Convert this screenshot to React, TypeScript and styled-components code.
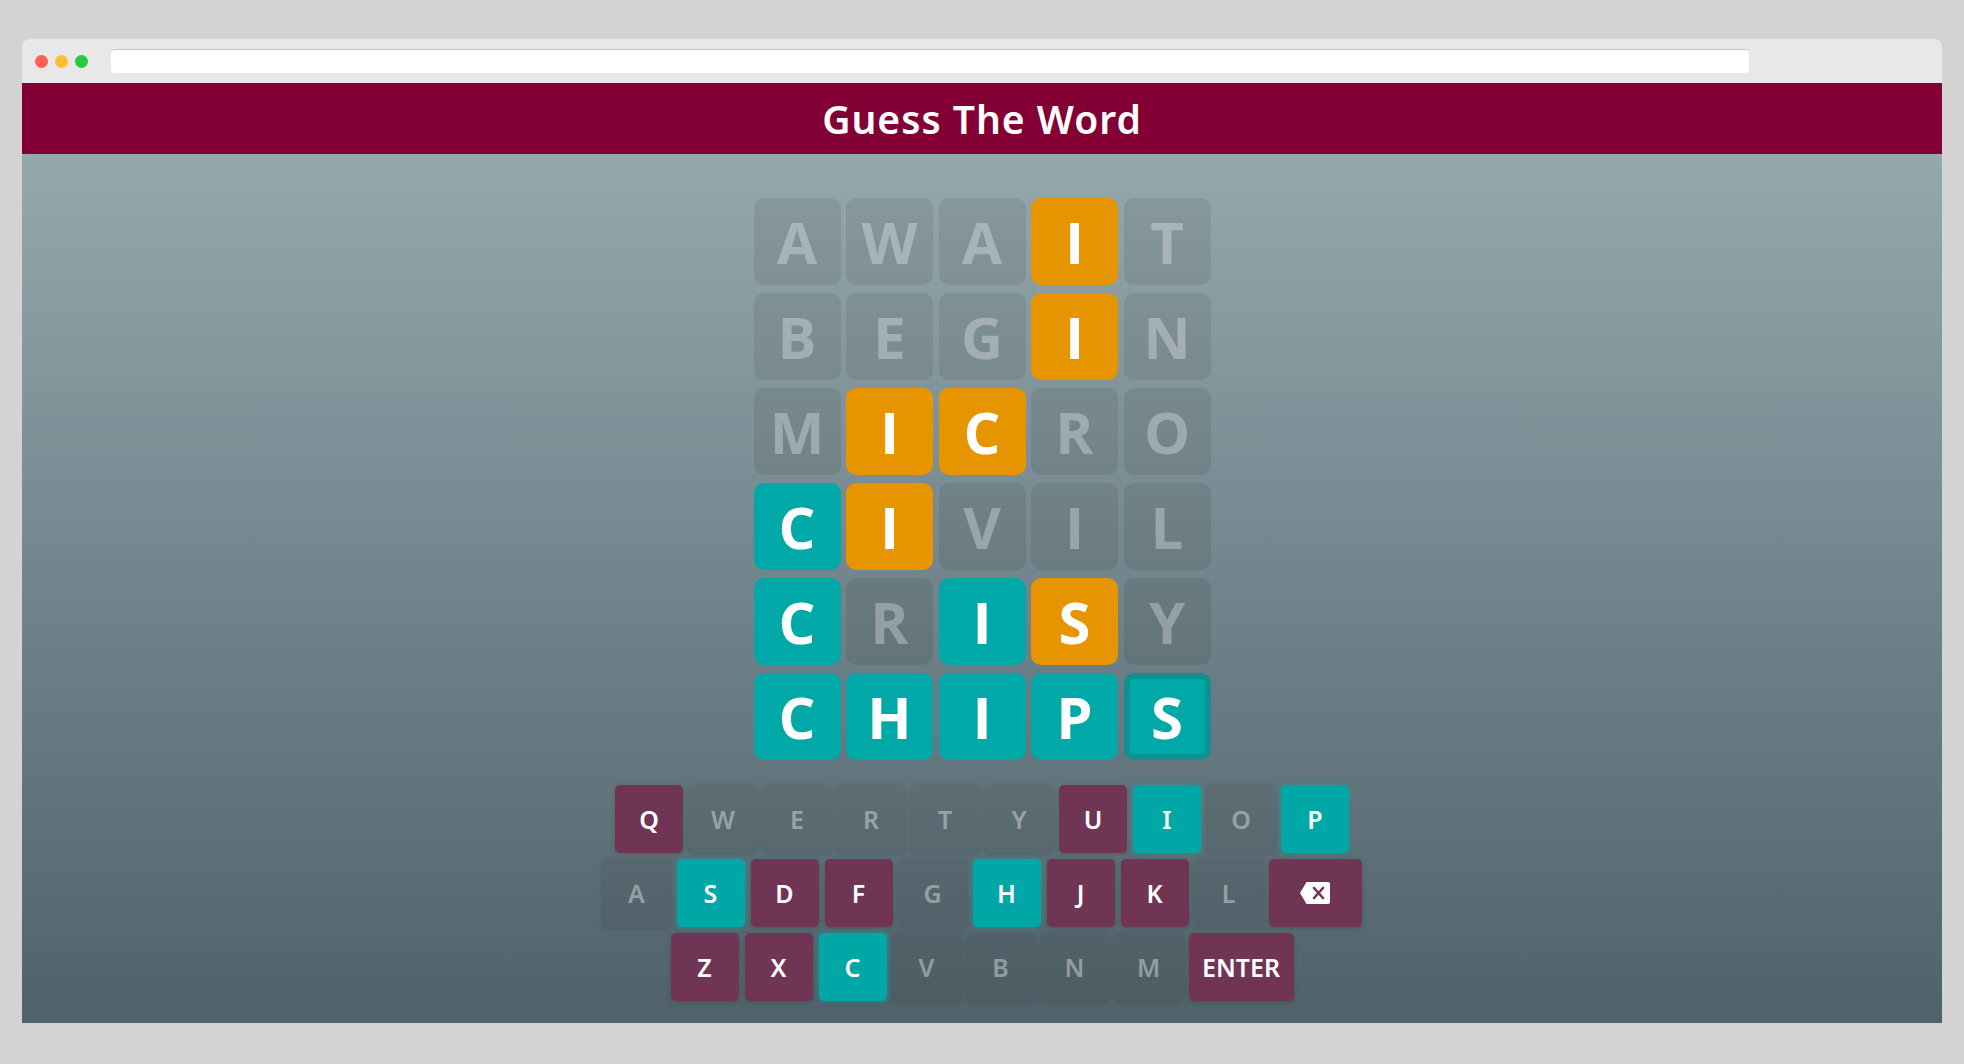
import styled, { createGlobalStyle } from 'styled-components';

type TileState = 'absent' | 'present' | 'correct' | 'active';
type KeyState = 'unused' | 'absent' | 'correct';

const GUESSES: { letter: string; state: TileState }[][] = [
  ['A', 'W', 'A', 'I', 'T'],
  ['B', 'E', 'G', 'I', 'N'],
  ['M', 'I', 'C', 'R', 'O'],
  ['C', 'I', 'V', 'I', 'L'],
  ['C', 'R', 'I', 'S', 'Y'],
  ['C', 'H', 'I', 'P', 'S'],
].map((row, r) =>
  row.map((letter, c) => {
    const marks: Record<string, TileState> = {
      '0-3': 'present',
      '1-3': 'present',
      '2-1': 'present',
      '2-2': 'present',
      '3-0': 'correct',
      '3-1': 'present',
      '4-0': 'correct',
      '4-2': 'correct',
      '4-3': 'present',
      '5-0': 'correct',
      '5-1': 'correct',
      '5-2': 'correct',
      '5-3': 'correct',
      '5-4': 'active',
    };
    return { letter, state: marks[`${r}-${c}`] ?? 'absent' };
  })
);

const KEY_ROWS = ['QWERTYUIOP', 'ASDFGHJKL', 'ZXCVBNM'];
const ABSENT_KEYS = 'QUDFJKZX';
const CORRECT_KEYS = 'IPSHC';

const keyState = (k: string): KeyState => {
  if (CORRECT_KEYS.includes(k)) return 'correct';
  if (ABSENT_KEYS.includes(k)) return 'absent';
  return 'unused';
};

const GlobalStyle = createGlobalStyle`
  * { box-sizing: border-box; }
  body {
    margin: 0;
    background: #d3d3d3;
    font-family: "Noto Sans", "Open Sans", sans-serif;
  }
`;

const Page = styled.div`
  height: 1064px;
  padding: 39px 22px 41px;
`;

const Window = styled.div`
  height: 100%;
  display: flex;
  flex-direction: column;
  border-radius: 8px 8px 0 0;
  overflow: hidden;
`;

const TitleBar = styled.div`
  height: 44px;
  flex-shrink: 0;
  display: flex;
  align-items: center;
  padding-left: 13px;
  background: #e8e8e8;
`;

const Dot = styled.span<{ $color: string }>`
  width: 13px;
  height: 13px;
  margin-right: 7px;
  border-radius: 50%;
  background: ${(p) => p.$color};
`;

const AddressBar = styled.div`
  width: 1638px;
  height: 24px;
  margin-left: 16px;
  background: #fff;
  border-top: 1px solid #c4c4c4;
  border-radius: 4px;
`;

const Header = styled.header`
  height: 71px;
  flex-shrink: 0;
  display: flex;
  align-items: center;
  justify-content: center;
  background: #830034;
`;

const Title = styled.h1`
  margin: 0;
  color: #fff;
  font-family: "Noto Sans", sans-serif;
  font-weight: 600;
  font-size: 39px;
  letter-spacing: 1px;
`;

const Main = styled.main`
  flex: 1;
  display: flex;
  flex-direction: column;
  align-items: center;
  padding-top: 44px;
  background: linear-gradient(to bottom, #95a8ae 0%, #4f6169 100%);
`;

const Board = styled.div`
  display: grid;
  grid-template-columns: repeat(5, 87px);
  grid-auto-rows: 87px;
  column-gap: 5.5px;
  row-gap: 8px;
`;

const tileBg: Record<TileState, string> = {
  absent: 'rgba(0, 0, 0, 0.08)',
  present: '#e69500',
  correct: '#00a8a8',
  active: '#00a8a8',
};

const Tile = styled.div<{ $state: TileState }>`
  display: flex;
  align-items: center;
  justify-content: center;
  border-radius: 10px;
  background: ${(p) => tileBg[p.$state]};
  border: ${(p) => (p.$state === 'active' ? '6px solid #0f9191' : 'none')};
  color: ${(p) => (p.$state === 'absent' ? 'rgba(255, 255, 255, 0.3)' : '#fff')};
  font-family: "Open Sans", sans-serif;
  font-weight: 700;
  font-size: 58px;
  line-height: 1;
`;

const Keyboard = styled.div`
  margin-top: 25px;
  display: flex;
  flex-direction: column;
  align-items: center;
  gap: 6px;
`;

const KeyRow = styled.div`
  display: flex;
  gap: 6px;
`;

const keyBg: Record<KeyState, string> = {
  unused: 'rgba(0, 0, 0, 0.06)',
  absent: '#703555',
  correct: '#00a7a7',
};

const Key = styled.button<{ $state: KeyState; $width?: number }>`
  width: ${(p) => p.$width ?? 68}px;
  height: 68px;
  padding: 0;
  display: flex;
  align-items: center;
  justify-content: center;
  border: none;
  border-radius: 5px;
  background: ${(p) => keyBg[p.$state]};
  box-shadow: ${(p) =>
    p.$state === 'correct'
      ? '0 0 6px rgba(0, 168, 168, 0.45)'
      : '0 1px 5px rgba(0, 0, 0, 0.16)'};
  color: ${(p) => (p.$state === 'unused' ? 'rgba(255, 255, 255, 0.4)' : '#fff')};
  font-family: "Noto Sans", sans-serif;
  font-weight: 600;
  font-size: 25px;
  cursor: pointer;
`;

const BackspaceIcon = () => (
  <svg width="30" height="22" viewBox="0 0 30 22">
    <path d="M6.5 0 H28 Q30 0 30 2 V20 Q30 22 28 22 H6.5 L0 11 Z" fill="#fff" />
    <path d="M14 6 L23 16 M23 6 L14 16" stroke="#703555" strokeWidth="2.6" strokeLinecap="round" />
  </svg>
);

export default function App() {
  return (
    <>
      <GlobalStyle />
      <Page>
        <Window>
          <TitleBar>
            <Dot $color="#ff5f57" />
            <Dot $color="#febc2e" />
            <Dot $color="#28c840" />
            <AddressBar />
          </TitleBar>
          <Header>
            <Title>Guess The Word</Title>
          </Header>
          <Main>
            <Board>
              {GUESSES.flat().map((tile, i) => (
                <Tile key={i} $state={tile.state}>
                  {tile.letter}
                </Tile>
              ))}
            </Board>
            <Keyboard>
              <KeyRow>
                {KEY_ROWS[0].split('').map((k) => (
                  <Key key={k} $state={keyState(k)}>{k}</Key>
                ))}
              </KeyRow>
              <KeyRow>
                {KEY_ROWS[1].split('').map((k) => (
                  <Key key={k} $state={keyState(k)}>{k}</Key>
                ))}
                <Key $state="absent" $width={93} aria-label="Backspace">
                  <BackspaceIcon />
                </Key>
              </KeyRow>
              <KeyRow>
                {KEY_ROWS[2].split('').map((k) => (
                  <Key key={k} $state={keyState(k)}>{k}</Key>
                ))}
                <Key $state="absent" $width={105}>ENTER</Key>
              </KeyRow>
            </Keyboard>
          </Main>
        </Window>
      </Page>
    </>
  );
}
